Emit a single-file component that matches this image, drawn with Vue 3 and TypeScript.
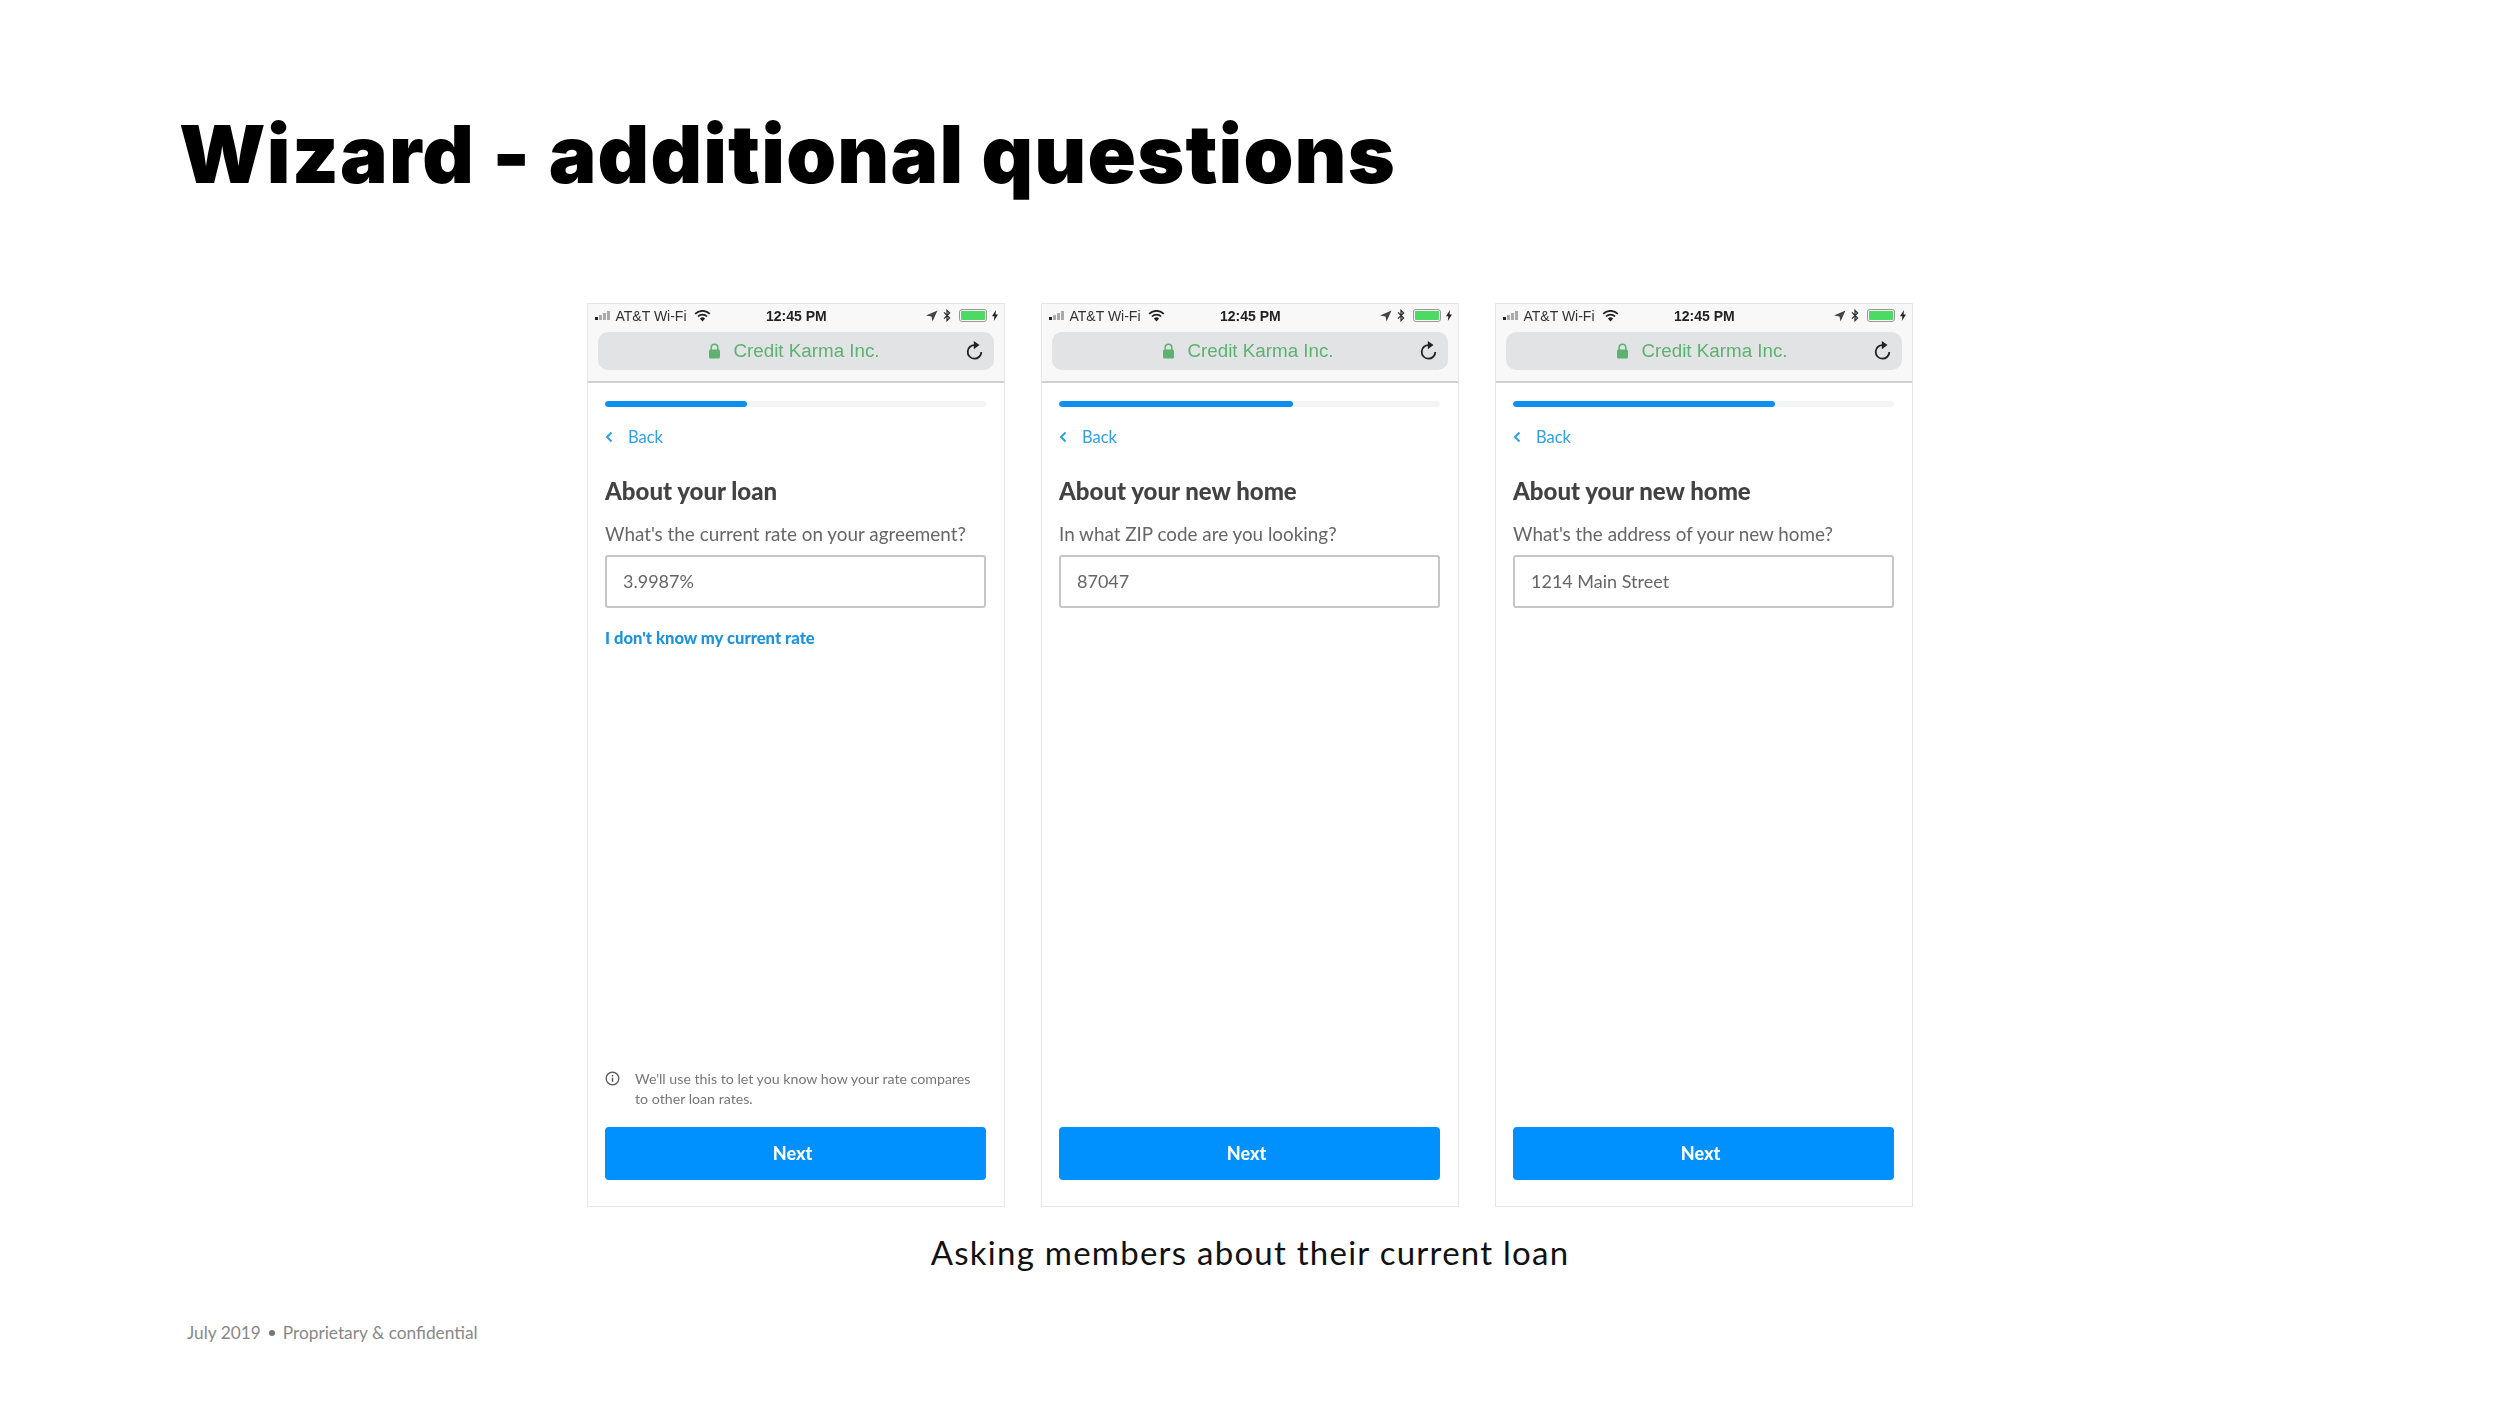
<template>
  <div class="slide">
    <h1 class="title">Wizard - additional questions</h1>

    <div class="phones">
      <div v-for="(phone, index) in phones" :key="index" class="phone">
        <div class="chrome">
          <div class="status">
            <div class="status-left">
              <span class="bars">
                <i class="on"></i><i></i><i></i><i></i>
              </span>
              <span class="carrier">AT&amp;T Wi-Fi</span>
              <svg class="wifi" width="17" height="12" viewBox="0 0 17 12">
                <path d="M8.500 11.500 5.900 8.600a3.700 3.700 0 0 1 5.200 0Z" fill="#222" />
                <path d="M3.900 6.500a6.600 6.600 0 0 1 9.200 0" fill="none" stroke="#222" stroke-width="1.700" />
                <path d="M1.200 3.800a10.400 10.400 0 0 1 14.600 0" fill="none" stroke="#222" stroke-width="1.700" />
              </svg>
            </div>
            <span class="clock">12:45 PM</span>
            <div class="status-right">
              <svg width="12" height="12" viewBox="0 0 12 12">
                <path d="M11.500.5 0 5.500l5.500 1 1 5Z" fill="#444" />
              </svg>
              <svg width="8" height="13" viewBox="0 0 8 13">
                <path d="M1 3.400 6.600 9 4 11.600V1.400L6.600 4 1 9.600" fill="none" stroke="#333" stroke-width="1.300" />
              </svg>
              <span class="battery"><i></i></span>
              <svg class="bolt" width="6" height="11" viewBox="0 0 6 11">
                <path d="M4 0 0 6.300h2.400L1.800 11 6 4.500H3.500Z" fill="#222" />
              </svg>
            </div>
          </div>
          <div class="url">
            <span class="url-label">
              <svg width="13" height="16" viewBox="0 0 13 16">
                <path d="M3.200 7V4.500a3.300 3.300 0 0 1 6.600 0V7" fill="none" stroke="#5cb270" stroke-width="1.500" />
                <rect x="1" y="6.500" width="11" height="9" rx="1.500" fill="#5cb270" />
              </svg>
              Credit Karma Inc.
            </span>
            <svg class="reload" width="20" height="20" viewBox="0 0 20 20">
              <path d="M11 4.100a6.800 6.800 0 1 0 6.300 6.800" fill="none" stroke="#222" stroke-width="1.800" />
              <path d="M9.800 0 15.500 4.100 9.800 8.200Z" fill="#222" />
            </svg>
          </div>
        </div>

        <div class="screen">
          <div class="progress">
            <div class="progress-fill" :style="{ width: phone.progress + '%' }"></div>
          </div>
          <div class="back">
            <svg width="8" height="12" viewBox="0 0 8 12">
              <path d="M6.500 1.500 2 6l4.500 4.500" fill="none" stroke="#2f9fe6" stroke-width="2" />
            </svg>
            <span>Back</span>
          </div>
          <h2 class="heading">{{ phone.heading }}</h2>
          <p class="question">{{ phone.question }}</p>
          <div class="field">{{ phone.value }}</div>
          <a v-if="phone.link" class="help">{{ phone.link }}</a>

          <div class="spacer"></div>

          <div v-if="phone.note" class="note">
            <svg width="15" height="15" viewBox="0 0 15 15">
              <circle cx="7.500" cy="7.500" r="6.300" fill="none" stroke="#555" stroke-width="1.300" />
              <path d="M7.500 6.700v4M7.500 4v1.500" stroke="#555" stroke-width="1.500" />
            </svg>
            <span>{{ phone.note }}</span>
          </div>
          <button class="next">Next</button>
        </div>
      </div>
    </div>

    <p class="caption">Asking members about their current loan</p>

    <div class="footer">
      <span>July 2019</span>
      <i class="dot"></i>
      <span>Proprietary &amp; confidential</span>
    </div>
  </div>
</template>

<script setup lang="ts">
interface Phone {
  progress: number
  heading: string
  question: string
  value: string
  link?: string
  note?: string
}

const phones: Phone[] = [
  {
    progress: 37.3,
    heading: 'About your loan',
    question: "What's the current rate on your agreement?",
    value: '3.9987%',
    link: "I don't know my current rate",
    note: "We'll use this to let you know how your rate compares to other loan rates."
  },
  {
    progress: 61.4,
    heading: 'About your new home',
    question: 'In what ZIP code are you looking?',
    value: '87047'
  },
  {
    progress: 68.8,
    heading: 'About your new home',
    question: "What's the address of your new home?",
    value: '1214 Main Street'
  }
]
</script>

<style>
html,
body {
  margin: 0;
  background: #fff;
}
</style>

<style scoped>
.slide {
  width: 2500px;
  height: 1406px;
  box-sizing: border-box;
  padding-top: 106px;
  font-family: "Lato", "Liberation Sans", sans-serif;
  overflow: hidden;
  background: #fff;
}

.title {
  margin: 0 0 0 179px;
  font-family: "Inter", "Liberation Sans", sans-serif;
  font-size: 80px;
  line-height: 96px;
  font-weight: 900;
  color: #000;
  letter-spacing: 1.200px;
}

.phones {
  display: flex;
  justify-content: center;
  gap: 36px;
  margin-top: 101px;
}

.phone {
  width: 418px;
  height: 904px;
  box-sizing: border-box;
  border: 1px solid #e6e6e6;
  display: flex;
  flex-direction: column;
  filter: blur(0.4px);
}

.chrome {
  height: 76.500px;
  background: #f8f8f8;
  border-bottom: 2px solid #d0d0d0;
  padding: 0 10px;
}

.status {
  height: 23px;
  display: flex;
  align-items: center;
  position: relative;
  justify-content: space-between;
  font-family: "Liberation Sans", sans-serif;
  font-size: 14px;
  color: #333;
}

.status-left {
  display: flex;
  align-items: center;
  gap: 6px;
  margin-left: -3px;
}

.bars {
  display: flex;
  align-items: flex-end;
  gap: 1.500px;
  height: 9px;
}

.bars i {
  width: 2.500px;
  background: #aaa;
}

.bars i:nth-child(1) { height: 3px; }
.bars i:nth-child(2) { height: 5px; }
.bars i:nth-child(3) { height: 7px; }
.bars i:nth-child(4) { height: 9px; }
.bars i.on { background: #222; }

.wifi {
  margin-left: 1px;
}

.clock {
  position: absolute;
  left: 168px;
  font-weight: 700;
  color: #222;
}

.status-right {
  display: flex;
  align-items: center;
  gap: 5px;
  margin-right: -4px;
}

.battery {
  width: 28px;
  height: 13px;
  box-sizing: border-box;
  border: 1px solid #999;
  border-radius: 3px;
  padding: 1px;
  margin-left: 3px;
  display: block;
}

.battery i {
  display: block;
  height: 100%;
  background: #4cd964;
  border-radius: 1px;
}

.url {
  height: 38px;
  margin-top: 5px;
  border-radius: 10px;
  background: #e2e3e5;
  display: flex;
  align-items: center;
  justify-content: center;
  position: relative;
}

.url-label {
  display: flex;
  align-items: center;
  gap: 12px;
  margin-left: -4px;
  font-family: "Liberation Sans", sans-serif;
  font-size: 18.800px;
  color: #5cb270;
}

.reload {
  position: absolute;
  right: 10px;
  top: 9px;
}

.screen {
  flex: 1;
  display: flex;
  flex-direction: column;
  padding: 18px 18px 26.500px 17px;
}

.progress {
  height: 6px;
  border-radius: 3px;
  background: #f3f4f5;
  overflow: hidden;
}

.progress-fill {
  height: 100%;
  background: #0c8fee;
  border-radius: 3px;
}

.back {
  display: flex;
  align-items: center;
  gap: 15px;
  margin-top: 22px;
  height: 16px;
  font-size: 16.500px;
  color: #2f9fe6;
}

.heading {
  margin: 31px 0 0;
  font-size: 24px;
  line-height: 30px;
  font-weight: 900;
  color: #424242;
}

.question {
  margin: 16px 0 0;
  font-size: 18.850px;
  line-height: 24px;
  color: #666;
}

.field {
  height: 53px;
  margin-top: 9px;
  box-sizing: border-box;
  border: 2px solid #c6c6c6;
  border-radius: 3px;
  padding-left: 16px;
  display: flex;
  align-items: center;
  font-size: 18px;
  color: #666;
}

.help {
  margin-top: 20px;
  font-size: 16.600px;
  line-height: 20px;
  font-weight: 900;
  color: #1a93e0;
}

.spacer {
  flex: 1;
}

.note {
  display: flex;
  gap: 15px;
  margin-bottom: 18px;
  padding-right: 10px;
  font-size: 14.200px;
  line-height: 20px;
  color: #777;
}

.note svg {
  flex: none;
  margin-top: 2px;
}

.next {
  height: 53px;
  border: 0;
  border-radius: 4px;
  background: #0091ff;
  color: #fff;
  font-family: inherit;
  font-size: 18px;
  font-weight: 900;
  padding: 0 6px 0 0;
}

.caption {
  margin: 23px 0 0;
  text-align: center;
  font-family: "Lato", sans-serif;
  font-size: 33px;
  line-height: 44px;
  color: #111;
  letter-spacing: 1.250px;
}

.footer {
  display: flex;
  align-items: center;
  gap: 8px;
  margin: 48px 0 0 187px;
  font-family: "Lato", sans-serif;
  font-size: 17.300px;
  line-height: 22px;
  color: #888;
}

.dot {
  width: 6px;
  height: 6px;
  border-radius: 50%;
  background: #777;
}
</style>
